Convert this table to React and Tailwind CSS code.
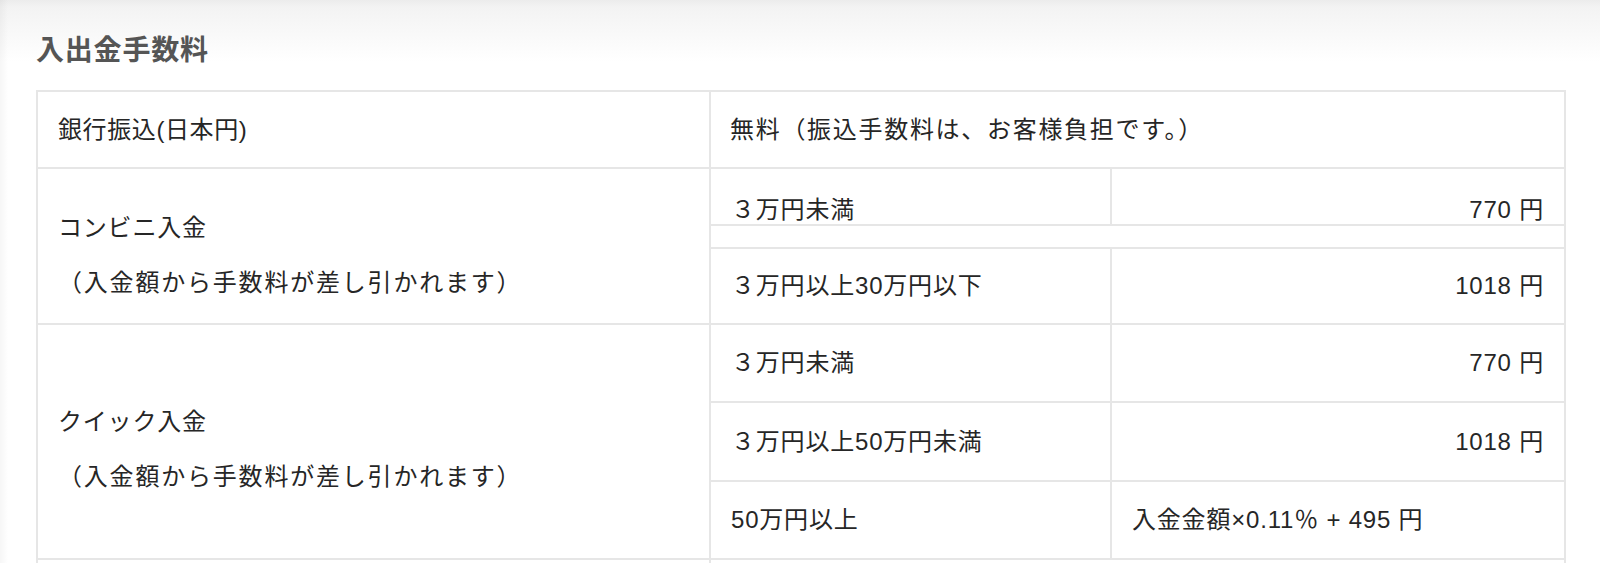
import React from 'react';

const line = 'border-[#e6e6e6]';

const feeRows = {
    konbini: [
        { label: '３万円未満', fee: '770 円' },
        { label: '３万円以上30万円以下', fee: '1018 円' },
    ],
    quick: [
        { label: '３万円未満', fee: '770 円', h: 'h-[78px] border-b-2' },
        { label: '３万円以上50万円未満', fee: '1018 円', h: 'h-[79px] border-b-2' },
        { label: '50万円以上', fee: '入金金額×0.11％ + 495 円', h: 'h-[76px]', left: true },
    ],
};

export default function App() {
    return (
        <div className="min-h-screen w-full bg-[linear-gradient(to_right,rgba(0,0,0,0.035),rgba(0,0,0,0)_8px),linear-gradient(to_bottom,#ececec,#f3f3f3_7px,#ffffff_62px)] pl-[36px] font-['Liberation_Sans','Noto_Sans_CJK_JP',sans-serif] text-[#262626]">
            <h2 className="pt-[37px] mb-[26px] text-[28px] leading-[27px] tracking-[0.8px] font-bold text-[#555555]">入出金手数料</h2>

            <div className={`w-[1530px] border-x-2 border-t-2 ${line} bg-white text-[24px] tracking-[0.8px]`}>
                {/* 銀行振込 */}
                <div className={`flex h-[77px] border-b-2 ${line}`}>
                    <div className={`w-[673px] shrink-0 border-r-2 ${line} flex items-center px-[20px] tracking-[0.6px]`}>銀行振込(日本円)</div>
                    <div className="flex-1 flex items-center px-[19px] tracking-[1.7px]">無料（振込手数料は、お客様負担です。）</div>
                </div>

                {/* コンビニ入金 */}
                <div className={`flex h-[156px] border-b-2 ${line}`}>
                    <div className={`w-[673px] shrink-0 border-r-2 ${line} flex items-center px-[20px] pt-[18px] leading-[55px]`}>
                        <p>コンビニ入金<br /><span className="tracking-[1.8px]">（入金額から手数料が差し引かれます）</span></p>
                    </div>
                    <div className="flex-1 flex flex-col">
                        <div className={`flex h-[57px] border-b-2 ${line} leading-[24px]`}>
                            <div className={`w-[401px] shrink-0 border-r-2 ${line} px-[20px] pt-[29px]`}>{feeRows.konbini[0].label}</div>
                            <div className="flex-1 px-[20px] pt-[29px] text-right">{feeRows.konbini[0].fee}</div>
                        </div>
                        <div className="h-[21px]"></div>
                        <div className={`flex flex-1 border-t-2 ${line}`}>
                            <div className={`w-[401px] shrink-0 border-r-2 ${line} flex items-center px-[20px]`}>{feeRows.konbini[1].label}</div>
                            <div className="flex-1 flex items-center justify-end px-[20px]">{feeRows.konbini[1].fee}</div>
                        </div>
                    </div>
                </div>

                {/* クイック入金 */}
                <div className={`flex h-[235px] border-b-2 ${line}`}>
                    <div className={`w-[673px] shrink-0 border-r-2 ${line} flex items-center px-[20px] pt-[15px] leading-[55px]`}>
                        <p>クイック入金<br /><span className="tracking-[1.8px]">（入金額から手数料が差し引かれます）</span></p>
                    </div>
                    <div className="flex-1 flex flex-col">
                        {feeRows.quick.map((r) => (
                            <div key={r.label} className={`flex ${r.h} ${line}`}>
                                <div className={`w-[401px] shrink-0 border-r-2 ${line} flex items-center px-[20px]`}>{r.label}</div>
                                <div className={`flex-1 flex items-center px-[20px] ${r.left ? 'justify-start' : 'justify-end'}`}>{r.fee}</div>
                            </div>
                        ))}
                    </div>
                </div>

                {/* next row (continues below the fold) */}
                <div className="flex h-[80px]">
                    <div className={`w-[673px] shrink-0 border-r-2 ${line}`}></div>
                    <div className="flex-1"></div>
                </div>
            </div>
        </div>
    );
}
